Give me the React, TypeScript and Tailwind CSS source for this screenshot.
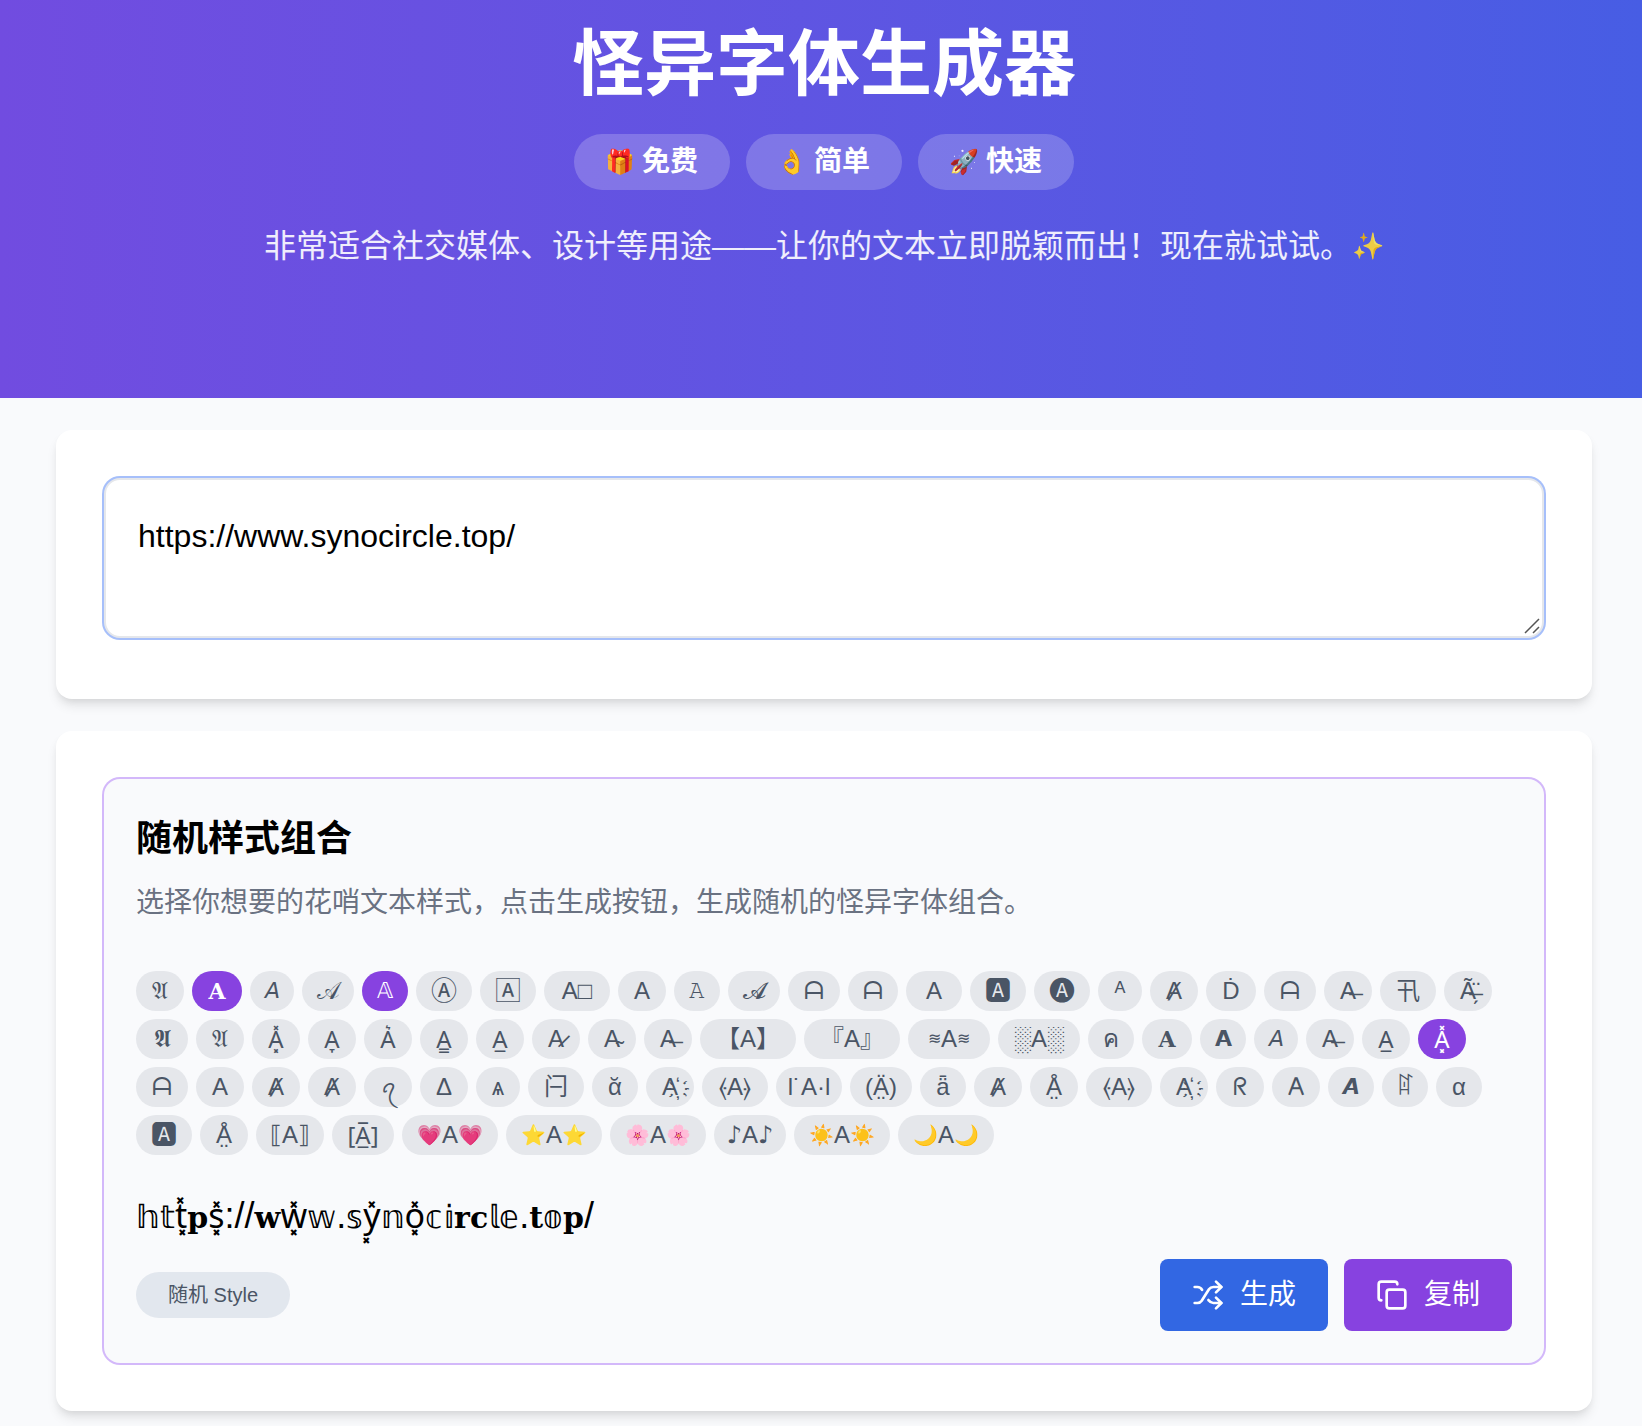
import React, { useState } from 'react';
import { Copy, Shuffle } from 'lucide-react';

interface Chip {
  label: string;
  size: string;
  font?: string;
  // decoration drawn on both sides of the label
  affix?: string;
  affixStyle?: string;
}

const XS = 'w-11';
const SM = 'w-11.5';
const MD = 'w-12';
const LG = 'w-12.5';
const XL = 'w-13';
const WIDE = 'w-14';
const BRACKET = 'w-16.5';
const SHADE = 'w-20.5';
const FULL = 'w-24';

const MARKS = "text-2xl font-['Noto_Sans']";
const SERIF = "text-[22px] font-['DejaVu_Serif'] font-bold";

const CHIPS: Chip[] = [
  { label: '𝔄', size: MD },
  { label: '𝐀', size: LG, font: SERIF },
  { label: '𝘈', size: XS, font: 'text-[22px]' },
  { label: '𝒜', size: XL },
  { label: '𝔸', size: SM, font: 'text-[22px]' },
  { label: 'Ⓐ', size: WIDE, font: 'text-[26px]' },
  { label: '🄰', size: WIDE, font: 'text-[26px]' },
  { label: 'A□', size: BRACKET },
  { label: 'A', size: MD },
  { label: '𝙰', size: SM, font: 'text-[22px]' },
  { label: '𝓐', size: XL },
  { label: 'ᗩ', size: XL },
  { label: 'ᗩ', size: LG },
  { label: 'A', size: WIDE },
  { label: '🅰︎', size: WIDE, font: 'text-[26px]' },
  { label: '🅐', size: WIDE, font: 'text-[26px]' },
  { label: 'ᴬ', size: XS },
  { label: 'Ⱥ', size: MD },
  { label: 'Ḋ', size: LG },
  { label: 'ᗩ', size: XL },
  { label: 'A̶', size: MD },
  { label: '卂', size: WIDE },
  { label: 'Ã̶̗̈', size: MD },
  { label: '𝕬', size: XL },
  { label: '𝔄', size: MD },
  { label: 'A͓̽', size: MD, font: MARKS },
  { label: 'A̞', size: MD, font: MARKS },
  { label: 'A͛', size: MD, font: MARKS },
  { label: 'A̳', size: MD, font: MARKS },
  { label: 'A̲', size: MD, font: MARKS },
  { label: 'A̷', size: MD },
  { label: 'A̴', size: MD },
  { label: 'A̶', size: MD },
  { label: '【A】', size: FULL },
  { label: '『A』', size: FULL },
  { label: 'A', size: SHADE, affix: '≋', affixStyle: 'text-base' },
  { label: '░A░', size: SHADE },
  { label: 'ค', size: SM },
  { label: '𝐀', size: LG, font: SERIF },
  { label: '𝗔', size: SM, font: 'text-[22px]' },
  { label: '𝘈', size: XS, font: 'text-[22px]' },
  { label: 'A̶', size: MD },
  { label: 'A̲', size: MD, font: MARKS },
  { label: 'A͓̽', size: MD, font: MARKS },
  { label: 'ᗩ', size: XL },
  { label: 'A', size: MD },
  { label: 'Ⱥ', size: MD },
  { label: 'Ⱥ', size: MD },
  { label: 'ꪖ', size: MD, font: 'text-xl' },
  { label: 'Δ', size: MD },
  { label: 'ѧ', size: XS },
  { label: '闩', size: WIDE },
  { label: 'ᾰ', size: SM },
  { label: 'A҉', size: MD },
  { label: '⦑A⦒', size: BRACKET },
  { label: 'l˙A·l', size: BRACKET },
  { label: '(Ä̤)', size: 'w-15.5' },
  { label: 'ǟ', size: SM },
  { label: 'Ⱥ', size: MD },
  { label: 'Å̤', size: MD },
  { label: '⦑A⦒', size: BRACKET },
  { label: 'A҉', size: MD },
  { label: 'ᖇ', size: MD },
  { label: '𐌀', size: MD, font: "text-2xl font-['DejaVu_Sans']" },
  { label: '𝘼', size: SM, font: 'text-[22px]' },
  { label: 'ꍏ', size: SM },
  { label: 'α', size: SM },
  { label: '🅰︎', size: WIDE, font: 'text-[26px]' },
  { label: 'Å̤', size: MD },
  { label: '⟦A⟧', size: 'w-17' },
  { label: '[A̲̅]', size: 'w-15.5', font: MARKS },
  { label: 'A', size: FULL, affix: '💗', affixStyle: 'text-xl' },
  { label: 'A', size: FULL, affix: '⭐', affixStyle: 'text-xl' },
  { label: 'A', size: FULL, affix: '🌸', affixStyle: 'text-xl' },
  { label: 'A', size: 'w-18', affix: '♪', affixStyle: "font-['DejaVu_Sans'] font-bold" },
  { label: 'A', size: FULL, affix: '☀️', affixStyle: 'text-xl' },
  { label: 'A', size: FULL, affix: '🌙', affixStyle: 'text-xl' },
];

const BADGES = [
  { emoji: '🎁', text: '免费' },
  { emoji: '👌', text: '简单' },
  { emoji: '🚀', text: '快速' },
];

const RESULT: { kind: 'double' | 'bold' | 'cross' | 'plain'; text: string }[] = [
  { kind: 'double', text: '𝕙𝕥' },
  { kind: 'cross', text: 't͓̽' },
  { kind: 'bold', text: '𝐩' },
  { kind: 'cross', text: 's͓̽' },
  { kind: 'plain', text: '://' },
  { kind: 'bold', text: '𝐰' },
  { kind: 'cross', text: 'w͓̽' },
  { kind: 'double', text: '𝕨' },
  { kind: 'plain', text: '.' },
  { kind: 'double', text: '𝕤' },
  { kind: 'cross', text: 'y͓̽' },
  { kind: 'double', text: '𝕟' },
  { kind: 'cross', text: 'o͓̽' },
  { kind: 'double', text: '𝕔𝕚' },
  { kind: 'bold', text: '𝐫𝐜' },
  { kind: 'double', text: '𝕝𝕖' },
  { kind: 'plain', text: '.' },
  { kind: 'bold', text: '𝐭' },
  { kind: 'double', text: '𝕠' },
  { kind: 'bold', text: '𝐩' },
  { kind: 'plain', text: '/' },
];

const RESULT_STYLES = {
  double: 'text-[32px]',
  bold: "text-3xl font-['DejaVu_Serif'] font-bold",
  cross: "text-[34px] font-['Noto_Sans']",
  plain: '',
};

const Hero: React.FC = () => (
  <header className="bg-linear-to-r from-[#714ce0] to-[#475de4] pt-6 pb-32 pl-1.5 text-center text-white">
    <h1 className="text-7xl leading-20 font-bold">怪异字体生成器</h1>
    <div className="mt-[30px] flex flex-wrap justify-center gap-4">
      {BADGES.map(({ emoji, text }) => (
        <span key={text} className="flex items-center gap-2 rounded-full bg-white/20 px-8 py-2 text-[28px] leading-10 font-semibold">
          <span className="flex w-7 justify-center text-2xl">{emoji}</span>
          {text}
        </span>
      ))}
    </div>
    <p className="mt-8 flex items-center justify-center text-[32px] leading-12 text-white/90">
      非常适合社交媒体、设计等用途——让你的文本立即脱颖而出！现在就试试。
      <span className="w-8 text-[26px]">✨</span>
    </p>
  </header>
);

const Card: React.FC<{ children: React.ReactNode }> = ({ children }) => (
  <section className="rounded-2xl bg-white p-12 shadow-[0_8px_12px_-2px_rgba(0,0,0,0.1),0_4px_8px_-4px_rgba(0,0,0,0.1)]">
    {children}
  </section>
);

export default function App() {
  const [text, setText] = useState('https://www.synocircle.top/');
  const [selected, setSelected] = useState<number[]>([1, 4, 43]);

  const toggle = (index: number) =>
    setSelected((prev) => (prev.includes(index) ? prev.filter((i) => i !== index) : [...prev, index]));

  return (
    <div lang="zh-CN" className="min-h-screen bg-[#f9fafc] font-['Liberation_Sans','Noto_Sans_CJK_SC',sans-serif] text-black">
      <Hero />
      <main className="flex flex-col gap-8 pt-8 pr-[50px] pb-[15px] pl-14">
        <Card>
          <div className="relative mb-[13px]">
            <textarea
              aria-label="输入文本"
              value={text}
              onChange={(e) => setText(e.target.value)}
              className="block h-40 w-full resize-none rounded-2xl border-2 border-gray-200 bg-white p-8 text-[32px] leading-12 ring-2 ring-[#a6bffa] outline-none"
            />
            <svg className="pointer-events-none absolute right-1 bottom-1 size-4" viewBox="0 0 16 16" fill="none" stroke="#555" strokeWidth="1.5" aria-hidden="true">
              <path d="M1 15 15 1M9 15l6-6" />
            </svg>
          </div>
        </Card>

        <Card>
          <div className="rounded-2xl bg-[#f9fafc] p-8 ring-2 ring-[#d3b8fa]">
            <h2 className="text-4xl leading-14 font-semibold">随机样式组合</h2>
            <p className="mt-4 text-[28px] leading-10 text-gray-500">选择你想要的花哨文本样式，点击生成按钮，生成随机的怪异字体组合。</p>

            <div className="mt-12 flex flex-wrap gap-2">
              {CHIPS.map(({ label, size, font, affix, affixStyle }, index) => (
                <button
                  key={index}
                  type="button"
                  aria-pressed={selected.includes(index)}
                  onClick={() => toggle(index)}
                  className={`flex h-10 items-center justify-center rounded-full leading-8 whitespace-nowrap ${size} ${font ?? 'text-2xl'} ${
                    selected.includes(index) ? 'bg-[#8742e0] text-white' : 'bg-gray-200 text-gray-600'
                  }`}
                >
                  {affix && <span className={affixStyle}>{affix}</span>}
                  {label}
                  {affix && <span className={affixStyle}>{affix}</span>}
                </button>
              ))}
            </div>

            <p className="mt-8 h-14 text-4xl leading-14 whitespace-nowrap">
              {RESULT.map(({ kind, text: part }, index) => (
                <span key={index} className={RESULT_STYLES[kind]}>{part}</span>
              ))}
            </p>

            <div className="mt-4 flex items-center justify-between">
              <span className="rounded-full bg-[#e2e7ee] px-8 py-2 text-xl leading-[30px] text-gray-600">随机 Style</span>
              <div className="flex gap-4">
                <button type="button" className="flex h-18 items-center gap-4 rounded-lg bg-[#3267e3] px-8 text-[28px] leading-10 text-white">
                  <Shuffle className="size-8" />
                  生成
                </button>
                <button type="button" className="flex h-18 items-center gap-4 rounded-lg bg-[#8742e0] px-8 text-[28px] leading-10 text-white">
                  <Copy className="size-8" />
                  复制
                </button>
              </div>
            </div>
          </div>
        </Card>
      </main>
    </div>
  );
}
